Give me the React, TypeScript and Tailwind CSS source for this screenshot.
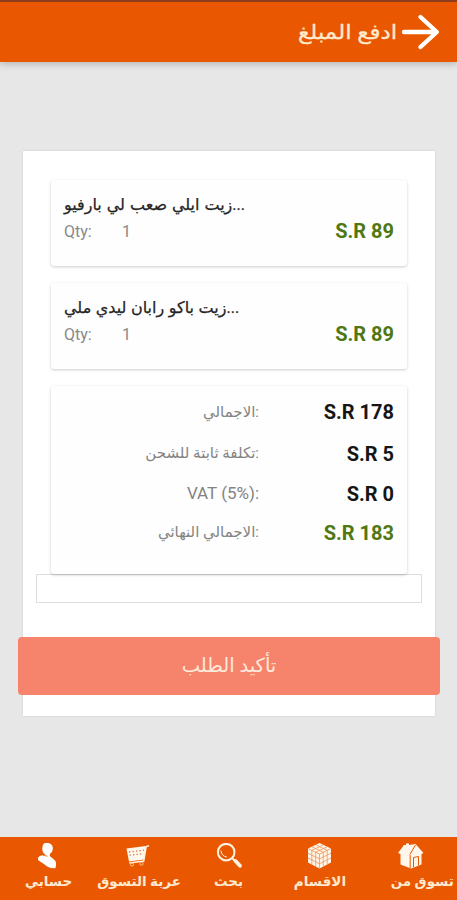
import type { ReactNode } from 'react';

const items = [
  { name: 'زيت ايلي صعب لي بارفيو...', qty: 1, price: 'S.R 89', spacing: '[word-spacing:1px]' },
  { name: 'زيت باكو رابان ليدي ملي...', qty: 1, price: 'S.R 89', spacing: '[word-spacing:0.6px]' },
];

const totals = [
  { label: 'الاجمالي:', value: 'S.R 178', color: 'text-[#161616]', row: 'h-[42px]', size: 'text-[15px]' },
  { label: 'تكلفة ثابتة للشحن:', value: 'S.R 5', color: 'text-[#161616]', row: 'h-[41px]', size: 'text-[15px]' },
  { label: 'VAT (5%):', value: 'S.R 0', color: 'text-[#161616]', row: 'h-[39px]', size: 'text-[17px]' },
  { label: 'الاجمالي النهائي:', value: 'S.R 183', color: 'text-[#4f7812]', row: 'h-[39px]', size: 'text-[15px]' },
];

function ArrowIcon() {
  return (
    <svg width="40" height="40" viewBox="0 0 40 40" fill="none" stroke="#fff" strokeWidth="4.4" strokeLinecap="round" strokeLinejoin="round">
      <path d="M3 20H35.5M19.5 5L35.8 20L19.5 35" />
    </svg>
  );
}

function UserIcon() {
  return (
    <svg width="26" height="28" viewBox="0 0 26 28" fill="#fff">
      <path d="M12 0C15.5 -0.7 19.5 1 19.8 4.5C20 7.5 18.8 9.5 17.2 10.5L16.7 13L21.5 17C23.2 18.5 23.5 21 22.5 25C18 25.8 14 24 11 21L5.5 17.5C4.5 16 5 13.5 7.5 12.8L12.5 11.8C9.5 10 9 7.5 9.5 4C9.8 1.5 10.5 0.4 12 0Z" />
      <path d="M10 12.2L14.5 13.2" stroke="#e95800" strokeWidth="0.8" />
    </svg>
  );
}

function CartIcon() {
  return (
    <svg width="26" height="28" viewBox="0 0 26 28" fill="none">
      <path d="M2.5 5.5L22 3L19.8 16.5L5 18.5Z" fill="#fff8ed" />
      <path d="M25 2.8L22.2 3.5L19.7 18L5.2 20" stroke="#fff2df" strokeWidth="1.5" />
      <path d="M5 9L20 7.2M5.5 12.2L19 10.7" stroke="#d8783c" strokeWidth="1.3" strokeDasharray="1.3 2.2" />
      <circle cx="8" cy="21.5" r="1.6" stroke="#ffc48d" />
      <circle cx="17.5" cy="20.7" r="1.6" stroke="#ffc48d" />
    </svg>
  );
}

function SearchIcon() {
  return (
    <svg width="28" height="28" viewBox="0 0 28 28" fill="none" stroke="#fff3e1" strokeLinecap="round">
      <circle cx="11.2" cy="9.2" r="8.3" strokeWidth="2" />
      <path d="M6 8C6.3 11.5 8.5 13.5 11.5 14" strokeWidth="1" />
      <path d="M17.5 15.5L19.5 17.5" strokeWidth="2" />
      <path d="M20.5 18L25 22.8" strokeWidth="3.8" />
    </svg>
  );
}

function CubeIcon() {
  return (
    <svg width="26" height="28" viewBox="0 0 26 28">
      <path d="M12.5 0L24 5.5V19.5L12.5 25.5L1 19.5V5.5Z" fill="#fff5e7" />
      <path
        d="M1 5.5L12.5 11L24 5.5M12.5 11V25.5M4.8 3.7L16.3 9.2V23.5M8.7 1.8L20.2 7.4V21.5M16.3 1.8L4.8 7.4V21.5M20.2 3.7L8.7 9.2V23.5M1 10.2L12.5 15.8L24 10.2M1 15L12.5 20.7L24 15"
        fill="none"
        stroke="#ec9256"
        strokeWidth="0.75"
      />
    </svg>
  );
}

function HomeIcon() {
  return (
    <svg width="28" height="28" viewBox="0 0 28 28">
      <path d="M1 10L7 2H9V0.5H12V2L18.5 1L26.5 10L24.5 11V21.5L14 25.5L3.5 21.5V11Z" fill="#fff7eb" />
      <path d="M18.5 2L12.8 11.5M13.2 12V25M16.5 24V14.5L21.5 13.5V22.5" fill="none" stroke="#e95800" strokeWidth="1" />
      <path d="M18 23.5V16L20.5 15.3V22.7Z" fill="#fff7eb" />
    </svg>
  );
}

function NavItem({ label, shift = '', children }: { label: string; shift?: string; children: ReactNode }) {
  return (
    <button className="flex h-full flex-1 basis-0 flex-col items-center pt-1.5">
      {children}
      <span className={`text-[13.5px] leading-[20px] font-bold whitespace-nowrap text-[#ffe9cf] ${shift}`}>{label}</span>
    </button>
  );
}

export default function App() {
  return (
    <div className="flex h-[900px] w-[457px] flex-col overflow-hidden bg-[#e7e7e7] font-[Roboto,'DejaVu_Sans',sans-serif]">
      <header className="z-10 flex h-[62px] shrink-0 items-center justify-end gap-1 border-t-2 border-[#8b3d1d] bg-[#e95800] pr-4 shadow-[0_2px_7px_rgba(0,0,0,0.22)]">
        <h1 className="origin-right scale-x-[1.15] text-[20px] leading-6 font-normal text-[#ffe9cf] [-webkit-text-stroke:0.3px_#ffe9cf]">ادفع المبلغ</h1>
        <ArrowIcon />
      </header>

      <main className="flex-1 px-[23px] pt-[89px]">
        <section className="h-[565px] w-[412px] bg-white pt-[29px] shadow-[0_0_2px_rgba(0,0,0,0.12)]">
          <div className="flex flex-col gap-[17px] px-7">
            {items.map((item) => (
              <article key={item.name} className="h-[86px] rounded-[3px] bg-[#fefefe] px-[13px] pt-3 shadow-[0_1px_3px_rgba(0,0,0,0.2)]">
                <h2 className={`h-[26px] text-[16px] leading-[26px] font-normal whitespace-nowrap text-[#242424] [-webkit-text-stroke:0.25px_#242424] ${item.spacing}`}>
                  {item.name}
                </h2>
                <div className="flex h-[27px] items-center text-[16px] text-[#898989]">
                  <span className="w-[58px]">Qty:</span>
                  <span>{item.qty}</span>
                  <span className="ml-auto pb-0.5 text-[20px] font-bold text-[#4f7812]">{item.price}</span>
                </div>
              </article>
            ))}
            <div className="h-[188px] rounded-[3px] bg-[#fefefe] pt-[5px] pr-[13px] shadow-[0_1px_3px_rgba(0,0,0,0.22)]">
              {totals.map((t) => (
                <div key={t.label} className={`flex items-center ${t.row}`}>
                  <span className={`w-[208px] text-right whitespace-nowrap text-[#838383] ${t.size}`}>{t.label}</span>
                  <span className={`ml-auto text-[20px] font-bold ${t.color}`}>{t.value}</span>
                </div>
              ))}
            </div>
          </div>
          <div className="mx-[13px] h-[29px] border border-[#dedede] bg-white" />
          <button className="mt-[34px] -ml-[5px] block h-[58px] w-[422px] rounded-[4px] bg-[#f6836b] text-[19.5px] text-[#ffeadc]">
            تأكيد الطلب
          </button>
        </section>
      </main>

      <nav className="flex h-[63px] shrink-0 bg-[#e95800]">
        <NavItem label="حسابي" shift="translate-x-[3px]"><UserIcon /></NavItem>
        <NavItem label="عربة التسوق" shift="translate-x-[2px]"><CartIcon /></NavItem>
        <NavItem label="بحث"><SearchIcon /></NavItem>
        <NavItem label="الاقسام"><CubeIcon /></NavItem>
        <NavItem label="تسوق من" shift="translate-x-[11px]"><HomeIcon /></NavItem>
      </nav>
    </div>
  );
}
